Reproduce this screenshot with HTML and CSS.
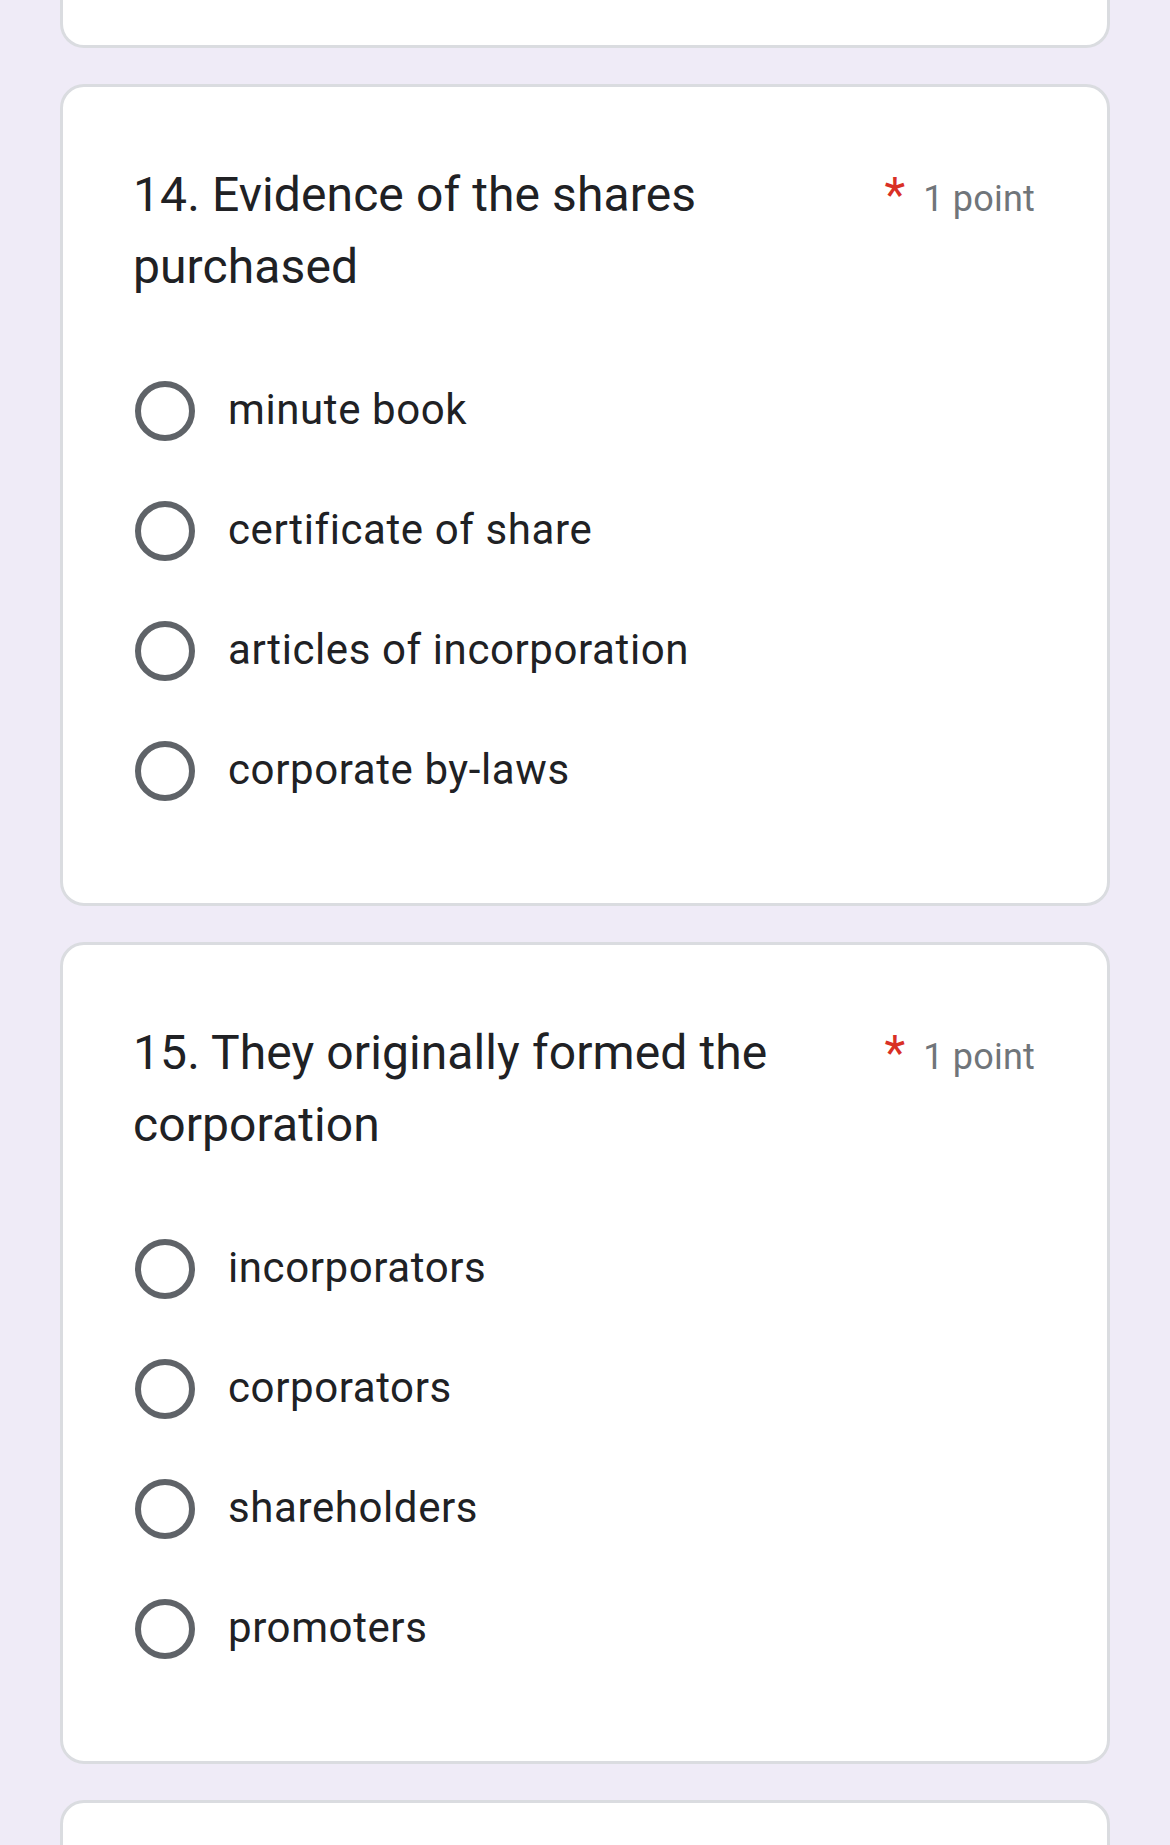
FILE: index.html
```html
<!DOCTYPE html>
<html lang="en">
<head>
<meta charset="utf-8">
<title>Form</title>
<link rel="stylesheet" href="styles.css">
</head>
<body>
<main class="page">
  <div class="card card-prev"></div>

  <section class="card">
    <div class="q-header">
      <div class="q-title">14. Evidence of the shares purchased</div>
      <div class="q-meta"><span class="req">*</span><span class="points">1 point</span></div>
    </div>
    <div class="options">
      <label class="option"><span class="radio"></span><span class="opt-text">minute book</span></label>
      <label class="option"><span class="radio"></span><span class="opt-text">certificate of share</span></label>
      <label class="option"><span class="radio"></span><span class="opt-text">articles of incorporation</span></label>
      <label class="option"><span class="radio"></span><span class="opt-text">corporate by-laws</span></label>
    </div>
  </section>

  <section class="card">
    <div class="q-header">
      <div class="q-title">15. They originally formed the corporation</div>
      <div class="q-meta"><span class="req">*</span><span class="points">1 point</span></div>
    </div>
    <div class="options">
      <label class="option"><span class="radio"></span><span class="opt-text">incorporators</span></label>
      <label class="option"><span class="radio"></span><span class="opt-text">corporators</span></label>
      <label class="option"><span class="radio"></span><span class="opt-text">shareholders</span></label>
      <label class="option"><span class="radio"></span><span class="opt-text">promoters</span></label>
    </div>
  </section>

  <div class="card card-next"></div>
</main>
</body>
</html>
```
FILE: styles.css
```css
html, body {
  margin: 0;
  padding: 0;
}
body {
  background: #efebf7;
  font-family: Roboto, "Liberation Sans", sans-serif;
  color: #202124;
  height: 1845px;
  overflow: hidden;
}
.page {
  display: flex;
  flex-direction: column;
  gap: 36px;
  padding: 0 60px;
}
.card {
  background: #ffffff;
  border: 3px solid #dadce0;
  border-radius: 24px;
  padding: 72px;
}
.card-prev {
  height: 48px;
  box-sizing: border-box;
  padding: 0;
  border-top: 0;
  border-top-left-radius: 0;
  border-top-right-radius: 0;
}
.card-next {
  height: 300px;
  padding: 0;
  flex-shrink: 0;
}
.q-header {
  display: flex;
  align-items: baseline;
  gap: 12px;
}
.q-title {
  flex: 1;
  min-width: 0;
  font-size: 48px;
  line-height: 72px;
  letter-spacing: 0.1px;
  color: #202124;
  margin-left: -2px;
}
.q-meta {
  display: flex;
  align-items: baseline;
  white-space: nowrap;
}
.req {
  color: #d93025;
  font-size: 48px;
  line-height: 72px;
  margin-right: 18px;
}
.points {
  font-size: 36px;
  color: #70757a;
  letter-spacing: 0.2px;
}
.options {
  display: flex;
  flex-direction: column;
  margin-top: 48px;
}
.option {
  display: flex;
  align-items: center;
  height: 120px;
}
.radio {
  width: 60px;
  height: 60px;
  box-sizing: border-box;
  border: 6px solid #5f6368;
  border-radius: 50%;
  flex-shrink: 0;
  margin-right: 33px;
}
.opt-text {
  font-size: 42px;
  line-height: 60px;
  letter-spacing: 0.6px;
  color: #202124;
  position: relative;
  top: -1px;
}
```
